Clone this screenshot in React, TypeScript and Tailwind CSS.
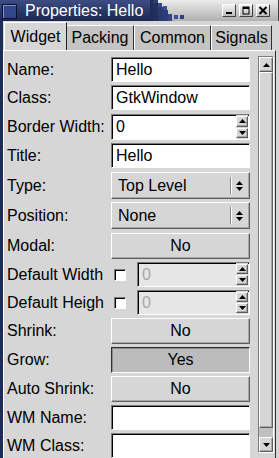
import React from 'react';

const font = { fontFamily: '"Liberation Sans", Arial, Helvetica, sans-serif' };

const raised =
  'border border-t-white border-l-white border-r-[#5e5e5e] border-b-[#5e5e5e] shadow-[inset_-1px_-1px_0_#a8a8a8]';
const sunken =
  'border border-t-[#7a7a7a] border-l-[#7a7a7a] border-r-white border-b-white shadow-[inset_1px_1px_0_#000]';

function Entry({ value = '', h = 25 }: { value?: string; h?: number }) {
  return (
    <div
      className={`w-[139px] bg-white ${sunken} flex items-center pl-[4px] text-[16px] text-black`}
      style={{ height: h }}
    >
      {value}
    </div>
  );
}

function Arrow({ up }: { up: boolean }) {
  return (
    <svg width="7" height="4" viewBox="0 0 7 4">
      <path d={up ? 'M0 4 L3.5 0 L7 4 Z' : 'M0 0 L3.5 4 L7 0 Z'} fill="#000" />
    </svg>
  );
}

function Spin({ value, disabled = false, w = 139, h = 26 }: { value: string; disabled?: boolean; w?: number; h?: number }) {
  return (
    <div
      className={`${disabled ? 'bg-[#e6e6e6] text-[#a8a8a8]' : 'bg-white text-black'} ${sunken} flex items-center text-[16px]`}
      style={{ width: w, height: h }}
    >
      <span className="flex-1 pl-[4px]">{value}</span>
      <div className="flex flex-col h-full w-[12px] mr-[1px] py-[1px] gap-[1px] bg-[#d6d6d6]">
        <div className={`flex-1 flex items-center justify-center bg-[#d6d6d6] ${raised}`}>
          <Arrow up />
        </div>
        <div className={`flex-1 flex items-center justify-center bg-[#d6d6d6] ${raised}`}>
          <Arrow up={false} />
        </div>
      </div>
    </div>
  );
}

function OptionMenu({ value }: { value: string }) {
  return (
    <div className={`w-[139px] h-[27px] bg-[#d6d6d6] ${raised} flex items-center text-[16px] text-black`}>
      <span className="flex-1 pl-[6px]">{value}</span>
      <div className="w-[2px] h-[17px] border-l border-l-[#8a8a8a] border-r border-r-white mr-[4px]" />
      <div className="flex flex-col gap-[2px] mr-[6px]">
        <Arrow up />
        <Arrow up={false} />
      </div>
    </div>
  );
}

function Toggle({ value, pressed = false }: { value: string; pressed?: boolean }) {
  return (
    <div
      className={`w-[139px] h-[26px] flex items-center justify-center text-[16px] text-black ${
        pressed
          ? 'bg-[#bcbcbc] border border-t-[#303030] border-l-[#303030] border-r-white border-b-white shadow-[inset_1px_1px_0_#8a8a8a]'
          : `bg-[#d6d6d6] ${raised}`
      }`}
    >
      {value}
    </div>
  );
}

function Check() {
  return <div className={`w-[12px] h-[12px] bg-white ${sunken}`} />;
}

function Row({ label, children, mt }: { label: string; children: React.ReactNode; mt: number }) {
  return (
    <div className="flex items-center" style={{ marginTop: mt }}>
      <div className="w-[104px] text-[16px] text-black whitespace-nowrap">{label}</div>
      {children}
    </div>
  );
}

function CheckSpin() {
  return (
    <div className="w-[139px] flex items-center">
      <div className="ml-[3px]"><Check /></div>
      <div className="ml-[11px]"><Spin value="0" disabled w={113} h={25} /></div>
    </div>
  );
}

function TitleButton({ kind }: { kind: 'min' | 'max' | 'close' }) {
  return (
    <div className="w-[14px] h-[13px] bg-gradient-to-b from-[#f2f2f2] to-[#bdbdbd] border border-t-white border-l-white border-r-[#404040] border-b-[#404040] flex items-center justify-center">
      <svg width="10" height="9" viewBox="0 0 10 9">
        {kind === 'min' && <rect x="2" y="6" width="6" height="2" fill="#000" />}
        {kind === 'max' && (
          <>
            <rect x="2" y="1" width="6" height="7" fill="none" stroke="#000" strokeWidth="1" />
            <rect x="2" y="1" width="6" height="2" fill="#000" />
          </>
        )}
        {kind === 'close' && <path d="M1.5 1 L8.5 8 M8.5 1 L1.5 8" stroke="#000" strokeWidth="2" />}
      </svg>
    </div>
  );
}

export default function App() {
  return (
    <div className="w-[279px] h-[458px] flex flex-col bg-[#1f2c5a] overflow-hidden" style={font}>
      {/* title bar */}
      <div className="h-[21px] flex shrink-0">
        <div className="w-[150px] bg-gradient-to-b from-[#3d4d82] to-[#1c2852] flex items-center">
          <div className="ml-[2px] mt-[2px] w-[15px] h-[15px] bg-[#34468a] border border-[#0c1230] shadow-[inset_1px_1px_0_#8090c8]" />
          <span className="ml-[8px] text-[16px] text-white leading-none">Properties: Hello</span>
        </div>
        <svg width="36" height="21" viewBox="0 0 36 21" className="shrink-0">
          <defs>
            <linearGradient id="g" x1="0" y1="0" x2="0" y2="1">
              <stop offset="0" stopColor="#ececec" />
              <stop offset="1" stopColor="#b0b0b0" />
            </linearGradient>
          </defs>
          <rect width="36" height="21" fill="url(#g)" />
          <rect x="0" y="0" width="3" height="21" fill="#1f2c5a" />
          <rect x="3" y="3" width="5" height="18" fill="#23305e" />
          <rect x="8" y="7" width="5" height="14" fill="#2a3a70" />
          <rect x="13" y="10" width="5" height="11" fill="#2c3e78" />
          <rect x="18" y="14" width="4" height="7" fill="#33478a" />
          <rect x="24" y="15" width="4" height="4" fill="#3a50a0" />
          <rect x="30" y="15" width="4" height="4" fill="#2c3e80" />
          <rect x="3" y="0" width="5" height="3" fill="#2e3d70" />
          <rect x="8" y="3" width="4" height="4" fill="#34458a" />
          <rect x="13" y="6" width="4" height="4" fill="#3a50a0" />
        </svg>
        <div className="flex-1 bg-gradient-to-b from-[#ececec] to-[#b0b0b0] flex items-center justify-end gap-[3px] pr-[8px] border-r border-r-[#404040]">
          <TitleButton kind="min" />
          <TitleButton kind="max" />
          <TitleButton kind="close" />
        </div>
      </div>

      {/* body */}
      <div className="flex-1 flex pl-[3px] pb-[5px] relative">
        <div className="flex-1 bg-[#d6d6d6] flex flex-col border-r-[3px] border-r-[#d6d6d6] shadow-[1px_0_0_#202020]">
          {/* tabs */}
          <div className="h-[29px] flex items-end pl-[1px]">
            <div className="w-[63px] h-[28px] bg-[#d6d6d6] border-t border-l border-t-white border-l-white border-r border-r-[#202020] flex items-center justify-center text-[16px] text-black">
              Widget
            </div>
            <div className="w-[67px] h-[25px] bg-[#c4c4c4] border-t border-t-white border-r border-r-[#303030] flex items-center justify-center text-[16px] text-black">
              Packing
            </div>
            <div className="w-[77px] h-[25px] bg-[#c4c4c4] border-t border-t-white border-l border-l-white border-r border-r-[#303030] flex items-center justify-center text-[16px] text-black">
              Common
            </div>
            <div className="w-[61px] h-[25px] bg-[#c4c4c4] border-t border-t-white border-l border-l-white border-r border-r-[#303030] flex items-center justify-center text-[16px] text-black">
              Signals
            </div>
          </div>

          {/* page */}
          <div className="flex-1 flex border-t border-t-white border-l border-l-white border-b border-b-[#303030] border-r border-r-[#303030]">
            <div className="flex-1 flex flex-col pl-[3px] pt-[6px] overflow-hidden">
              <Row label="Name:" mt={0}><Entry value="Hello" /></Row>
              <Row label="Class:" mt={3}><Entry value="GtkWindow" /></Row>
              <Row label="Border Width:" mt={4}><Spin value="0" /></Row>
              <Row label="Title:" mt={3}><Entry value="Hello" /></Row>
              <Row label="Type:" mt={4}><OptionMenu value="Top Level" /></Row>
              <Row label="Position:" mt={3}><OptionMenu value="None" /></Row>
              <Row label="Modal:" mt={4}><Toggle value="No" /></Row>
              <Row label="Default Width" mt={3}><CheckSpin /></Row>
              <Row label="Default Heigh" mt={3}><CheckSpin /></Row>
              <Row label="Shrink:" mt={3}><Toggle value="No" /></Row>
              <Row label="Grow:" mt={3}><Toggle value="Yes" pressed /></Row>
              <Row label="Auto Shrink:" mt={3}><Toggle value="No" /></Row>
              <Row label="WM Name:" mt={3}><Entry /></Row>
              <Row label="WM Class:" mt={3}><Entry /></Row>
            </div>
            {/* scrollbar */}
            <div className="w-[16px] my-[5px] mr-[1px] bg-[#c0c0c0] border border-t-[#7a7a7a] border-l-[#7a7a7a] border-r-white border-b-white flex flex-col">
              <div className={`h-[15px] bg-[#d6d6d6] ${raised} flex items-center justify-center`}>
                <Arrow up />
              </div>
              <div className={`h-[356px] bg-[#d6d6d6] ${raised}`} />
              <div className="flex-1" />
              <div className={`h-[15px] bg-[#d6d6d6] ${raised} flex items-center justify-center`}>
                <Arrow up={false} />
              </div>
            </div>
          </div>
        </div>
        {/* frame corner grip */}
        <div className="absolute bottom-0 right-[14px] h-[5px] flex gap-[2px] items-center">
          <div className="w-[4px] h-[3px] bg-[#8a96b8]" />
          <div className="w-[4px] h-[3px] bg-[#8a96b8]" />
          <div className="w-[4px] h-[3px] bg-[#8a96b8]" />
          <div className="w-[4px] h-[3px] bg-[#8a96b8]" />
        </div>
      </div>
    </div>
  );
}
